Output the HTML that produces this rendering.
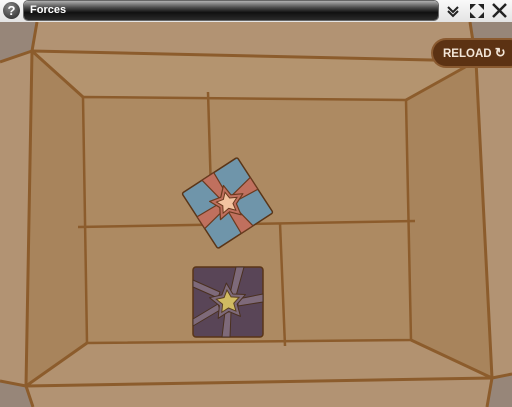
<!DOCTYPE html>
<html><head><meta charset="utf-8"><style>
html,body{margin:0;padding:0;width:512px;height:407px;overflow:hidden;background:#f0f0f0;font-family:"Liberation Sans",sans-serif}
#tb{position:absolute;left:0;top:0;width:512px;height:22px;background:linear-gradient(#fafafa,#e4e4e4)}
#title{position:absolute;left:24px;top:1px;width:414px;height:19px;border-radius:4px;background:linear-gradient(#b0b0b0 0%,#4a4a4a 35%,#111 60%,#2a2a2a 100%);box-shadow:0 0 0 1px #666;color:#fff;font-weight:bold;font-size:11px;line-height:19px;padding-left:6px;box-sizing:border-box}
#help{position:absolute;left:3px;top:2px;width:17px;height:17px;border-radius:50%;background:radial-gradient(circle at 40% 30%,#888,#222);color:#fff;font-size:13px;font-weight:bold;text-align:center;line-height:17px}
svg{position:absolute;left:0;top:0}
#reload{position:absolute;left:433px;top:40px;width:90px;height:26px;border-radius:13px;background:#5c3213;box-shadow:0 0 0 2px #8a5a30;color:#f3e6d8;font-weight:bold;font-size:11.5px;line-height:26px;padding-left:10px;box-sizing:border-box}
</style></head><body>
<svg width="512" height="407" viewBox="0 0 512 407">
<rect x="0" y="22" width="512" height="385" fill="#b29373"/>
<polygon points="0,22 37,22 32,51 0,62" fill="#978679"/>
<polygon points="470,22 512,22 512,58 477,62" fill="#978679"/>
<polygon points="0,381 26,386 33,407 0,407" fill="#978679"/>
<polygon points="492,378 512,374 512,407 487,407" fill="#978679"/>
<polygon points="32,51 83,97 87,343 26,386" fill="#a8845c"/>
<polygon points="476,61 406,100 411,340 492,378" fill="#a8845c"/>
<polygon points="32,51 476,61 406,100 83,97" fill="#b4946f"/>
<polygon points="87,343 411,340 492,378 26,386" fill="#b29270"/>
<polygon points="83,97 406,100 411,340 87,343" fill="#ad8a62"/>
<g stroke="#8c5c2c" stroke-width="3" fill="none" stroke-linejoin="round">
<polyline points="37,22 32,51 26,386 33,407"/>
<polyline points="470,22 476,61 492,378 487,407"/>
<line x1="0" y1="62" x2="32" y2="51"/>
<line x1="32" y1="51" x2="476" y2="61"/>
<line x1="476" y1="61" x2="512" y2="56"/>
<line x1="0" y1="381" x2="26" y2="386"/>
<line x1="26" y1="386" x2="492" y2="378"/>
<line x1="492" y1="378" x2="512" y2="374"/>
<line x1="32" y1="51" x2="83" y2="97"/>
<line x1="476" y1="61" x2="406" y2="100"/>
<line x1="26" y1="386" x2="87" y2="343"/>
<line x1="492" y1="378" x2="411" y2="340"/>
<polygon points="83,97 406,100 411,340 87,343" stroke-width="2.5"/>
<line x1="208" y1="92" x2="212" y2="225" stroke-width="2.5"/>
<line x1="78" y1="227" x2="415" y2="221" stroke-width="2.5"/>
<line x1="280" y1="223" x2="285" y2="346" stroke-width="2.5"/>
</g>
<g transform="translate(227.5,203) rotate(-33)">
<rect x="-33" y="-33" width="66" height="66" rx="2" fill="#6f95aa" stroke="#5a3517" stroke-width="1.5"/>
<g fill="#c0705e" stroke="#6a3a1f" stroke-width="1.2" stroke-linejoin="round">
<polygon points="-9,-33 5,-33 4,-8 -4,-8"/>
<polygon points="33,-9 33,5 8,3 8,-4"/>
<polygon points="-5,33 9,33 4,8 -4,8"/>
<polygon points="-33,-5 -33,9 -8,4 -8,-4"/>
<polygon transform="rotate(20)" points="0,-18 5.2,-7.2 17.1,-5.6 8.5,2.7 10.6,14.6 0,9 -10.6,14.6 -8.5,2.7 -17.1,-5.6 -5.2,-7.2"/>
</g>
<polygon transform="rotate(20)" fill="#f2c3a0" stroke="#6a3a1f" stroke-width="1" points="0,-11 3.2,-4.4 10.5,-3.4 5.2,1.7 6.5,8.9 0,5.5 -6.5,8.9 -5.2,1.7 -10.5,-3.4 -3.2,-4.4"/>
</g>
<g transform="translate(228,302)">
<rect x="-35" y="-35" width="70" height="70" rx="3" fill="#594557" stroke="#5a3517" stroke-width="1.5"/>
<g fill="#7e6a7a" stroke="#4a3020" stroke-width="1" stroke-linejoin="round">
<polygon points="-35,-22 -35,-15 -10,-4 -8,-10"/>
<polygon points="8,-35 16,-35 8,-6 2,-8"/>
<polygon points="35,-8 35,0 10,4 10,-3"/>
<polygon points="-35,17 -35,24 -8,8 -10,2"/>
<polygon points="-6,35 2,35 3,10 -3,10"/>
<polygon transform="rotate(-5)" points="0,-19 5.5,-7.6 18,-5.9 8.9,2.9 11.2,15.4 0,9.5 -11.2,15.4 -8.9,2.9 -18,-5.9 -5.5,-7.6"/>
</g>
<polygon transform="rotate(-5)" fill="#d1bb62" stroke="#5a4020" stroke-width="1" points="0,-12 3.5,-4.8 11.4,-3.7 5.6,1.8 7.1,9.7 0,6 -7.1,9.7 -5.6,1.8 -11.4,-3.7 -3.5,-4.8"/>
</g>
</svg>
<div id="tb"></div>
<div id="help">?</div>
<div id="title">Forces</div>
<svg width="512" height="22" viewBox="0 0 512 22">
<polyline points="448,7 453,12 458,7" fill="none" stroke="#222" stroke-width="2"/>
<polyline points="448,11 453,16 458,11" fill="none" stroke="#222" stroke-width="2"/>
<g fill="#222"><polygon points="470,4 476,4 470,10"/><polygon points="484,4 478,4 484,10"/><polygon points="470,18 476,18 470,12"/><polygon points="484,18 478,18 484,12"/></g>
<g stroke="#222" stroke-width="2.5"><line x1="493" y1="4" x2="506" y2="17"/><line x1="506" y1="4" x2="493" y2="17"/></g>
</svg>
<div id="reload">RELOAD <span style="font-size:13px">↻</span></div>
</body></html>
